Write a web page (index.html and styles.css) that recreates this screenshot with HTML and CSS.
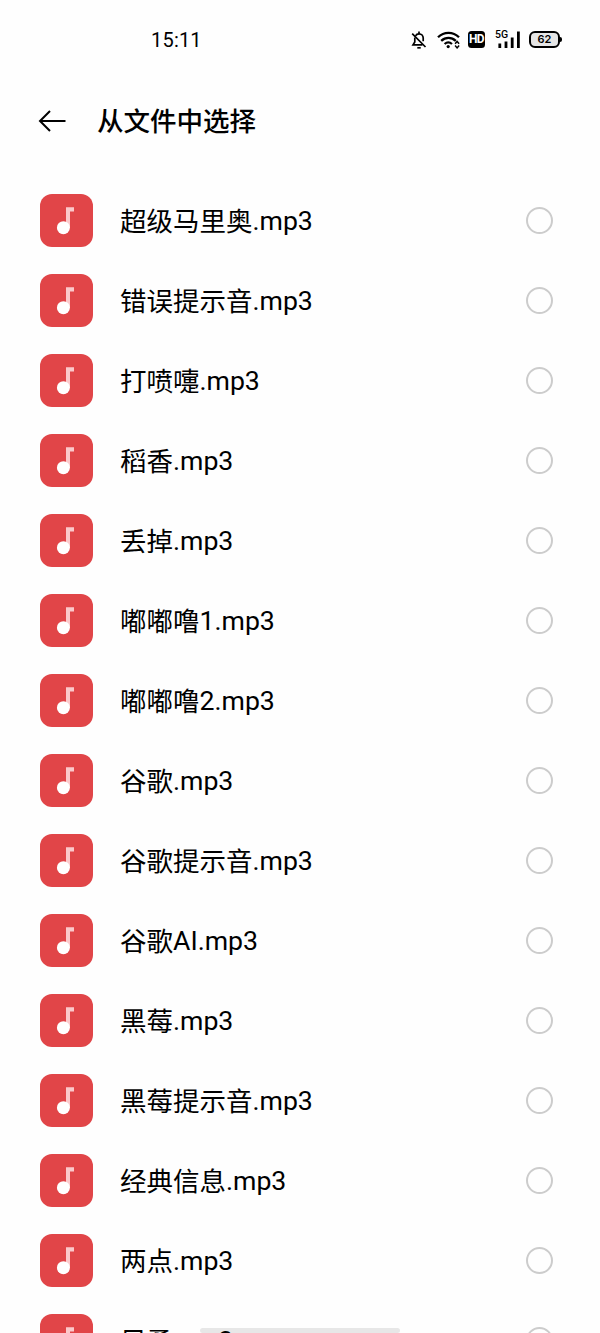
FILE: index.html
```
<!DOCTYPE html>
<html lang="zh-CN">

<head>
    <meta charset="UTF-8">
    <meta name="viewport" content="width=device-width, initial-scale=1.0">
    <title>从文件中选择</title>
    <link rel="stylesheet" href="styles.css">
</head>

<body>
    <!-- 音乐图标 -->
    <svg class="defs" width="0" height="0">
        <symbol id="music" viewBox="0 0 53 53">
            <path d="M26 13.3h8v4.2h-4V34h-4z" fill="#fbc9cb"/>
            <circle cx="23.4" cy="33.7" r="6.5" fill="#fff"/>
        </symbol>
    </svg>

    <!-- 状态栏 -->
    <div class="status">
        <span class="time">15:11</span>
        <div class="status-icons">
            <svg class="bell" width="16" height="18" viewBox="0 0 16 18" fill="none" stroke="#000" stroke-width="1.7">
                <path d="M4.5 4.8C5.2 3.5 6.4 2.8 8 2.800c2.600 0 4.200 1.900 4.200 4.300v3.200M3.800 6.500v4.400L2 13.800H11.500"/>
                <path d="M1.200 2.700L14.500 16M8 .6v2.200"/>
                <path d="M6.300 16.800h3.400"/>
            </svg>
            <svg class="wifi" width="24" height="18" viewBox="0 0 24 18" fill="none" stroke="#000" stroke-width="2.300">
                <path d="M1 6.300C7 .4 16 .4 22 6.300M4.200 9.800c4.300-4 10.300-4 14.600 0M7.600 13c2.400-2.100 5-2.100 7.400 0"/>
                <circle cx="11.200" cy="15.600" r="1.600" fill="#000" stroke="none"/>
                <path d="M18.100 12.700l2-2.300 2 2.300M18.100 14.600l2 2.300 2-2.300" stroke-width="1.500"/>
            </svg>
            <span class="hd">HD</span>
            <div class="signal">
                <span class="net">5G</span>
                <svg width="26" height="18" viewBox="0 0 26 18">
                    <path d="M3.400 12.500h2.800V17H3.400zM9.600 10.500h2.800V17H9.600zM15.800 6.500h2.800V17h-2.800zM22 .5h2.800V17H22z"/>
                </svg>
            </div>
            <div class="battery"><span class="level">62</span></div>
        </div>
    </div>

    <!-- 标题栏 -->
    <div class="header">
        <svg class="back" width="28" height="22" viewBox="0 0 28 22" fill="none" stroke="#000" stroke-width="2">
            <path d="M27.500 11H2M12 1L2 11l10 10"/>
        </svg>
        <h1>从文件中选择</h1>
    </div>

    <!-- 文件列表 -->
    <ul class="list">
        <li><svg class="icon"><use href="#music"/></svg><span class="name">超级马里奥<span class="ext">.mp3</span></span><i class="radio"></i></li>
        <li><svg class="icon"><use href="#music"/></svg><span class="name">错误提示音<span class="ext">.mp3</span></span><i class="radio"></i></li>
        <li><svg class="icon"><use href="#music"/></svg><span class="name">打喷嚏<span class="ext">.mp3</span></span><i class="radio"></i></li>
        <li><svg class="icon"><use href="#music"/></svg><span class="name">稻香<span class="ext">.mp3</span></span><i class="radio"></i></li>
        <li><svg class="icon"><use href="#music"/></svg><span class="name">丢掉<span class="ext">.mp3</span></span><i class="radio"></i></li>
        <li><svg class="icon"><use href="#music"/></svg><span class="name">嘟嘟噜<span class="ext">1.mp3</span></span><i class="radio"></i></li>
        <li><svg class="icon"><use href="#music"/></svg><span class="name">嘟嘟噜<span class="ext">2.mp3</span></span><i class="radio"></i></li>
        <li><svg class="icon"><use href="#music"/></svg><span class="name">谷歌<span class="ext">.mp3</span></span><i class="radio"></i></li>
        <li><svg class="icon"><use href="#music"/></svg><span class="name">谷歌提示音<span class="ext">.mp3</span></span><i class="radio"></i></li>
        <li><svg class="icon"><use href="#music"/></svg><span class="name">谷歌<span class="ext">AI.mp3</span></span><i class="radio"></i></li>
        <li><svg class="icon"><use href="#music"/></svg><span class="name">黑莓<span class="ext">.mp3</span></span><i class="radio"></i></li>
        <li><svg class="icon"><use href="#music"/></svg><span class="name">黑莓提示音<span class="ext">.mp3</span></span><i class="radio"></i></li>
        <li><svg class="icon"><use href="#music"/></svg><span class="name">经典信息<span class="ext">.mp3</span></span><i class="radio"></i></li>
        <li><svg class="icon"><use href="#music"/></svg><span class="name">两点<span class="ext">.mp3</span></span><i class="radio"></i></li>
        <li><svg class="icon"><use href="#music"/></svg><span class="name">另勇<span class="ext">.mp3</span></span><i class="radio"></i></li>
    </ul>

    <!-- 底部手势条 -->
    <div class="gesture"></div>
</body>

</html>
```
FILE: styles.css
```
* {
    margin: 0;
    padding: 0;
    box-sizing: border-box;
    list-style-type: none;
}

body {
    height: 1333px;
    overflow: hidden;
    position: relative;
    background-color: #fefefe;
    color: #000;
    font-family: Roboto, "Noto Sans CJK SC", sans-serif;
}

.defs {
    position: absolute;
}

svg {
    display: block;
    flex-shrink: 0;
}

/* 状态栏 */
.status {
    height: 80px;
    padding: 0 37px 0 151px;
    display: flex;
    align-items: center;
    justify-content: space-between;
}

.time {
    font-size: 20px;
    line-height: 24px;
    letter-spacing: 0.2px;
}

.status-icons {
    display: flex;
    align-items: center;
    padding-bottom: 1px;
}

.wifi {
    margin-left: 10px;
}

.hd {
    width: 17px;
    height: 17px;
    margin-left: 7px;
    border-radius: 3.5px;
    background-color: #000;
    color: #fff;
    font-size: 12px;
    font-weight: 700;
    line-height: 17px;
    letter-spacing: -0.7px;
    text-align: center;
}

.signal {
    width: 26px;
    height: 18px;
    margin-left: 10px;
    position: relative;
}

/* 叠在信号格上方 */
.net {
    position: absolute;
    left: 0;
    top: -1px;
    font-size: 10.5px;
    font-weight: 500;
    line-height: 10px;
}

.battery {
    width: 31px;
    height: 17px;
    margin: 0 3px 0 8px;
    border: 2px solid #000;
    border-radius: 6px;
    background-color: #e6e6e6;
    position: relative;
}

.battery::after {
    content: "";
    position: absolute;
    right: -4px;
    top: 4px;
    width: 2px;
    height: 5px;
    border-radius: 0 2px 2px 0;
    background-color: #000;
}

.level {
    display: block;
    font-family: Inter, sans-serif;
    font-size: 11px;
    font-weight: 600;
    line-height: 13px;
    text-align: center;
}

/* 标题栏 */
.header {
    height: 82px;
    padding: 0 38px;
    display: flex;
    align-items: center;
}

.header h1 {
    margin-left: 31px;
    padding-top: 2px;
    font-size: 26.5px;
    font-weight: 500;
    line-height: 40px;
}

/* 文件列表 */
.list {
    padding: 18.5px 47px 0 40px;
}

.list li {
    height: 80px;
    display: flex;
    align-items: center;
}

.icon {
    width: 53px;
    height: 53px;
    border-radius: 12px;
    background-color: #e14548;
}

.name {
    flex: 1;
    margin-left: 27px;
    padding-top: 2px;
    font-size: 26.5px;
    line-height: 40px;
}

/* 西文基线比中文略高 */
.ext {
    font-size: 26.67px;
    line-height: 1;
    vertical-align: 1px;
}

.radio {
    width: 27px;
    height: 27px;
    border: 2px solid #ccc;
    border-radius: 50%;
}

/* 底部手势条 */
.gesture {
    position: absolute;
    left: 200px;
    bottom: 0;
    width: 200px;
    height: 5px;
    border-radius: 3px;
    background-color: rgba(0, 0, 0, 0.09);
}
```
